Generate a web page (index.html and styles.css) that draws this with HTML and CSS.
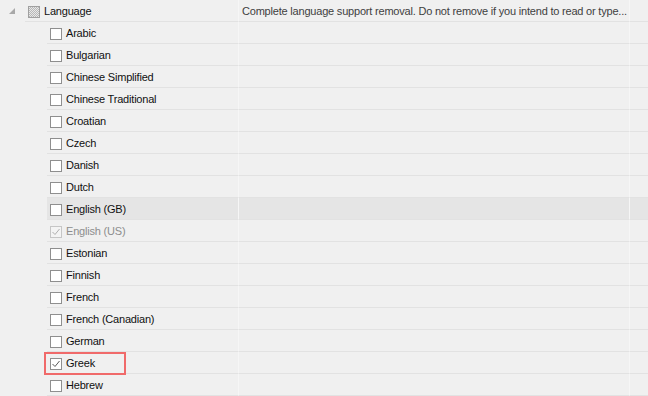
FILE: index.html
```html
<!DOCTYPE html>
<html lang="en">
<head>
    <meta charset="UTF-8">
    <title>Components</title>
    <link rel="stylesheet" href="styles.css">
</head>
<body>
    <div class="tree">
        <div class="row parent">
            <div class="expander">
                <svg width="6" height="6" viewBox="0 0 6 6"><polygon points="6,0 6,6 0,6" fill="#a8a8a8"/></svg>
            </div>
            <div class="cell name"><span class="box mixed"></span>Language</div>
            <div class="cell desc">Complete language support removal. Do not remove if you intend to read or type...</div>
            <div class="cell tail"></div>
        </div>
        <div class="row child"><div class="indent"></div><div class="cell name"><span class="box"></span>Arabic</div><div class="cell desc"></div><div class="cell tail"></div></div>
        <div class="row child"><div class="indent"></div><div class="cell name"><span class="box"></span>Bulgarian</div><div class="cell desc"></div><div class="cell tail"></div></div>
        <div class="row child"><div class="indent"></div><div class="cell name"><span class="box"></span>Chinese Simplified</div><div class="cell desc"></div><div class="cell tail"></div></div>
        <div class="row child"><div class="indent"></div><div class="cell name"><span class="box"></span>Chinese Traditional</div><div class="cell desc"></div><div class="cell tail"></div></div>
        <div class="row child"><div class="indent"></div><div class="cell name"><span class="box"></span>Croatian</div><div class="cell desc"></div><div class="cell tail"></div></div>
        <div class="row child"><div class="indent"></div><div class="cell name"><span class="box"></span>Czech</div><div class="cell desc"></div><div class="cell tail"></div></div>
        <div class="row child"><div class="indent"></div><div class="cell name"><span class="box"></span>Danish</div><div class="cell desc"></div><div class="cell tail"></div></div>
        <div class="row child"><div class="indent"></div><div class="cell name"><span class="box"></span>Dutch</div><div class="cell desc"></div><div class="cell tail"></div></div>
        <div class="row child hover"><div class="indent"></div><div class="cell name"><span class="box"></span>English (GB)</div><div class="cell desc"></div><div class="cell tail"></div></div>
        <div class="row child disabled"><div class="indent"></div><div class="cell name"><span class="box checked"><svg width="10" height="10" viewBox="0 0 10 10"><polyline points="1.5,5 4,7.5 8.5,2" fill="none" stroke="#b0b0b0" stroke-width="1"/></svg></span>English (US)</div><div class="cell desc"></div><div class="cell tail"></div></div>
        <div class="row child"><div class="indent"></div><div class="cell name"><span class="box"></span>Estonian</div><div class="cell desc"></div><div class="cell tail"></div></div>
        <div class="row child"><div class="indent"></div><div class="cell name"><span class="box"></span>Finnish</div><div class="cell desc"></div><div class="cell tail"></div></div>
        <div class="row child"><div class="indent"></div><div class="cell name"><span class="box"></span>French</div><div class="cell desc"></div><div class="cell tail"></div></div>
        <div class="row child"><div class="indent"></div><div class="cell name"><span class="box"></span>French (Canadian)</div><div class="cell desc"></div><div class="cell tail"></div></div>
        <div class="row child"><div class="indent"></div><div class="cell name"><span class="box"></span>German</div><div class="cell desc"></div><div class="cell tail"></div></div>
        <div class="row child"><div class="indent"></div><div class="cell name open"><span class="mark"><span class="box checked"><svg width="10" height="10" viewBox="0 0 10 10"><polyline points="1.5,5 4,7.5 8.5,2" fill="none" stroke="#5a5a5a" stroke-width="1"/></svg></span>Greek</span></div><div class="cell desc"></div><div class="cell tail"></div></div>
        <div class="row child"><div class="indent"></div><div class="cell name"><span class="box"></span>Hebrew</div><div class="cell desc"></div><div class="cell tail"></div></div>
    </div>
</body>
</html>
```

FILE: styles.css
```css
body {
    margin: 0;
    background-color: #f0f0f0;
    font-family: 'Liberation Sans', Arial, sans-serif;
    font-size: 11px;
    letter-spacing: -0.2px;
    color: #111;
    overflow: hidden;
}

.tree {
    width: 648px;
}

.row {
    display: flex;
    height: 22px;
    line-height: 21px;
}

.expander {
    width: 25px;
    flex: none;
    display: flex;
    align-items: center;
    justify-content: center;
    padding-right: 2px;
    box-sizing: border-box;
}

.indent {
    width: 47px;
    flex: none;
}

.cell {
    border-bottom: 1px solid #e2e2e2;
    border-left: 1px solid #f6f6f6;
    box-sizing: border-box;
    white-space: nowrap;
    overflow: hidden;
}

.name {
    display: flex;
    align-items: center;
    padding-left: 3px;
    padding-top: 2px;
    border-left: none;
}

.name.open {
    overflow: visible;
    padding-top: 0;
}

.parent .name {
    width: 213px;
}

.child .name {
    width: 191px;
}

.desc {
    width: 391px;
    padding-left: 3px;
    padding-top: 1px;
    line-height: 20px;
    color: #404040;
}

.tail {
    flex: 1;
}

.box {
    width: 12px;
    height: 12px;
    margin-right: 4px;
    border: 1px solid #8f8f8f;
    background-color: #fff;
    box-sizing: border-box;
    flex: none;
    display: flex;
    align-items: center;
    justify-content: center;
}

.box.mixed {
    border-color: #a0a0a0;
    background-color: #d2d2d2;
    background-image: repeating-conic-gradient(#b8b8b8 0 25%, #e8e8e8 0 50%);
    background-size: 2px 2px;
}

.hover .cell {
    background-color: #e5e5e5;
}

.disabled .name {
    color: #8d8d8d;
}

.disabled .box {
    border-color: #c6c6c6;
    background-color: #f4f4f4;
}

.mark {
    display: flex;
    align-items: center;
    margin-left: -6px;
    margin-top: 1px;
    padding-left: 4px;
    padding-top: 1px;
    width: 74px;
    height: 18px;
    border: 2px solid #f06a6a;
}
```
